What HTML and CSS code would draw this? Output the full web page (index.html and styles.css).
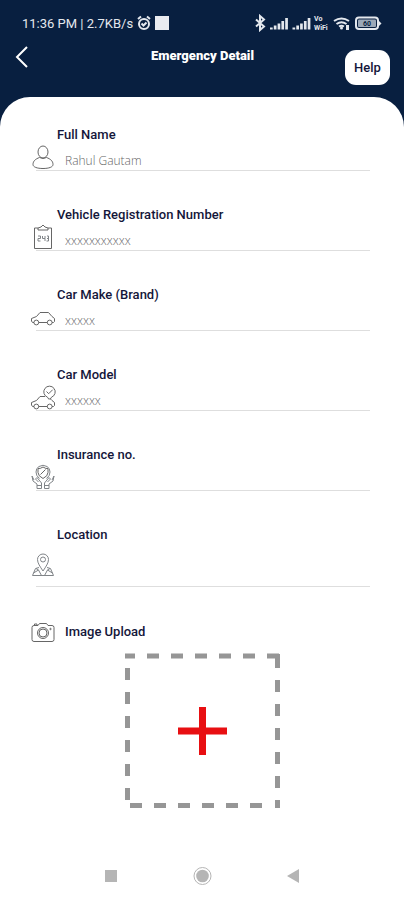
FILE: index.html
```html
<!DOCTYPE html>
<html lang="en">
<head>
<meta charset="utf-8">
<meta name="viewport" content="width=device-width, initial-scale=1">
<title>Emergency Detail</title>
<link rel="stylesheet" href="styles.css">
</head>
<body>
<div class="status">
  <span class="status-text">11:36 PM | 2.7KB/s</span>
  <svg class="alarm" width="14" height="16" viewBox="0 0 14 16" aria-hidden="true"><circle cx="7" cy="9" r="5"/><path d="M1 4l3-2.500M13 4l-3-2.500M4.500 8.500l2 2 3-3"/></svg>
  <span class="square"></span>
  <svg class="signals" width="127" height="18" viewBox="0 0 127 18" aria-hidden="true">
    <path class="line" d="M1 5.500l8 7-4 3.500V2l4 3.500-8 7"/>
    <path class="fill" d="M15 15.500v-2h2.700v2zM18.800 15.500v-4h2.700v4zM22.600 15.500v-6h2.700v6zM26.400 15.500v-8.500h2.700v8.500zM30.200 15.500V4h2.700v11.500zM37.500 15.500v-2h2.700v2zM41.300 15.500v-4h2.700v4zM45.100 15.500v-6h2.700v6zM48.900 15.500v-8.500h2.700v8.500zM52.700 15.500V4h2.700v11.500z"/>
    <text x="59" y="7">Vo</text><text x="59" y="16">WiFi</text>
    <path class="line" d="M79 7q7.500-5 15 0M81.500 10q5-3.500 10 0M84 12.500q2.500-1.500 5 0"/><circle class="fill" cx="86.500" cy="14" r="1.500"/><path class="fill" d="M91 11h3v5h-3z"/>
    <rect class="line" x="101" y="3.500" width="22" height="11.500" rx="3"/><path class="fill" d="M124 7l2.500 2.500-2.500 2.500z"/><rect class="cell" x="103" y="5.500" width="18" height="7.500" rx="1"/><text class="level" x="108" y="12">60</text>
  </svg>
</div>
<header class="header">
  <button class="back" type="button" aria-label="Back"><svg width="14" height="22" viewBox="0 0 14 22"><path d="M12 1L2 11l10 10"/></svg></button>
  <h1>Emergency Detail</h1>
  <button class="help" type="button">Help</button>
</header>
<main class="sheet">
  <form class="form">
    <div class="field">
      <label for="name">Full Name</label>
      <div class="row">
        <svg class="icon" viewBox="0 0 24 24" aria-hidden="true"><ellipse cx="12" cy="7" rx="5" ry="6"/><path d="M8.500 12.500C4.500 14 2 16 2 19.500c0 2.500 4 4 10 4s10-1.500 10-4c0-3.500-2.500-5.500-6.500-7M8.500 12.500q3.500 2 7 0"/></svg>
        <input id="name" type="text" placeholder="Rahul Gautam">
      </div>
    </div>
    <div class="field">
      <label for="registration">Vehicle Registration Number</label>
      <div class="row">
        <svg class="icon" viewBox="0 0 24 24" aria-hidden="true"><path d="M7 3H3.500v20.500h17V3H17M7 5V3l3-1 2-2 2 2 3 1v2z"/><path class="thin" d="M7 11h2.500v2.500H7V16h2.500M11.500 11v2.500H14V16M14 11v2.500M16 11h1.500v5H15.500M16 13.500h1.500"/></svg>
        <input id="registration" type="text" placeholder="xxxxxxxxxxx">
      </div>
    </div>
    <div class="field">
      <label for="make">Car Make (Brand)</label>
      <div class="row">
        <svg class="icon" viewBox="0 0 24 24" aria-hidden="true"><path d="M3 17.500H1.500L.5 16v-2.500l5-2L9 7.500h8.500l3.500 4 2.500 2v3l-1 1H21M7.600 17.500h8.800"/><circle cx="5.300" cy="17.500" r="2.400"/><circle cx="18.700" cy="17.500" r="2.400"/></svg>
        <input id="make" type="text" placeholder="xxxxx">
      </div>
    </div>
    <div class="field">
      <label for="model">Car Model</label>
      <div class="row">
        <svg class="icon" viewBox="0 0 24 24" aria-hidden="true"><path d="M3 21.500H1.500L.5 20v-2.500l5-2L9 11.500h5M18.500 13l2.500 2.500 2.500 2v3l-1 1H21M7.600 21.500h8.800M18 14.500l-1.500-2.300a5.700 5.700 0 1 1 4 0L19 14.500M15.500 6.500l2.200 2.200 4-4"/><circle cx="5.300" cy="21.500" r="2.400"/><circle cx="18.700" cy="21.500" r="2.400"/></svg>
        <input id="model" type="text" placeholder="xxxxxx">
      </div>
    </div>
    <div class="field">
      <label for="insurance">Insurance no.</label>
      <div class="row">
        <svg class="icon masked" viewBox="0 0 24 24" aria-hidden="true"><path d="M12 2q3 2 5 1.500v4Q17 11 12 13.500 7 11 7 7.500v-4Q9 4 12 2zM9.500 9.500l5-5"/><path class="thin" d="M8 1.500q4-2.500 8 0Q19 3 19 7t-3.500 6.500M8 1.500Q5 3 5 7t3.500 6.500M1 11l1 5 4 3v4.500h4.500V18L6 12.500 4.500 14l3 3M3 15L1 11M23 11l-1 5-4 3v4.500h-4.500V18l4.500-5.500 1.500 1.500-3 3M21 15l2-4M6 20.500h4.500M13.500 20.500H18"/></svg>
        <input id="insurance" type="text">
      </div>
    </div>
    <div class="field tall">
      <label for="location">Location</label>
      <div class="row">
        <svg class="icon" viewBox="0 0 24 24" aria-hidden="true"><path class="thin" d="M12 18C9 13.500 6.500 10 6.500 6.500a5.500 5.500 0 0 1 11 0C17.500 10 15 13.500 12 18z"/><circle class="thin" cx="12" cy="6.500" r="2.500"/><path class="thin" d="M8 14.500l-3.500 1L1.500 22.500h21l-3-7-3.500-1M2.500 20l5-3 3 5.500M21.500 20l-5-3-3 5.500M5 15.500l2.500 1.500M19 15.500L16.500 17"/></svg>
        <input id="location" type="text">
      </div>
    </div>
    <div class="upload-title">
      <svg class="icon" viewBox="0 0 24 24" aria-hidden="true"><path d="M3 4.500h4L8.500 2.500h7L17 4.500h4q2 0 2 2v12q0 2-2 2H3q-2 0-2-2v-12q0-2 2-2zM3.500 4V3H6v1"/><circle cx="12" cy="12" r="5.500"/><circle cx="12" cy="12" r="4"/><circle cx="19.500" cy="8" r=".7"/></svg>
      <span id="upload-label">Image Upload</span>
    </div>
    <button class="upload" type="button" aria-labelledby="upload-label">
      <svg width="156" height="156" viewBox="-1 0 156 156" aria-hidden="true">
        <path class="dash" d="M0 3h10M22 3H155" stroke-dasharray="12 12"/>
        <path class="dash" d="M152.500 1v14M152.500 27v121" stroke-dasharray="12 12"/>
        <path class="dash" d="M152.500 1v14M152.500 148v7"/>
        <path class="dash" d="M2.500 15v133" stroke-dasharray="12 12"/>
        <path class="dash" d="M5 152.500h133" stroke-dasharray="12 12"/>
        <path class="plus" d="M53 78h49M77.500 54v48"/>
      </svg>
    </button>
  </form>
  <nav class="nav" aria-label="System">
    <button type="button" aria-label="Recent apps"><svg width="19" height="20" viewBox="0 0 19 20"><path d="M3 4h12v12H3z"/></svg></button>
    <button type="button" aria-label="Home"><svg width="19" height="20" viewBox="0 0 19 20"><circle class="ring" cx="9.500" cy="10" r="8.500"/><circle cx="9.500" cy="10" r="6.300"/></svg></button>
    <button type="button" aria-label="Go back"><svg width="19" height="20" viewBox="0 0 19 20"><path d="M3 10l12-7v14z"/></svg></button>
  </nav>
</main>
</body>
</html>
```
FILE: styles.css
```css
* { box-sizing: border-box; }

body {
  margin: 0;
  min-height: 100vh;
  display: flex;
  flex-direction: column;
  background: #081f40;
  color: #14163a;
  font-family: Roboto, sans-serif;
}

button {
  padding: 0;
  border: 0;
  background: none;
  font: inherit;
  color: inherit;
}

svg { display: block; flex: none; }

.status {
  display: flex;
  align-items: center;
  gap: 4px;
  height: 46px;
  padding: 0 22px;
  color: #e4e8ee;
}
.status-text { font-size: 13px; font-weight: 400; white-space: nowrap; }
.alarm { fill: none; stroke: #e4e8ee; stroke-width: 2; }
.square { width: 14px; height: 14px; background: #e9ebf0; }
.signals { margin-left: auto; fill: #e4e8ee; }
.signals .line { fill: none; stroke: #e4e8ee; stroke-width: 2; }
.signals .cell { fill: #9ba8b8; }
.signals text { font-size: 7px; font-weight: 700; }
.signals .level { fill: #081f40; }

.header {
  display: grid;
  grid-template-columns: 60px 1fr 60px;
  height: 51px;
  padding: 0 14px 0 15px;
}
.back { width: 14px; height: 22px; }
.back svg { fill: none; stroke: #fff; stroke-width: 2; }
h1 {
  margin: 0;
  color: #fff;
  font-size: 13px;
  line-height: 20px;
  font-weight: 900;
  text-align: center;
}
.help {
  justify-self: end;
  width: 45px;
  height: 35px;
  margin-top: 4px;
  border-radius: 11px;
  background: #fff;
  font-size: 13px;
  font-weight: 500;
}

.sheet {
  flex: 1;
  display: flex;
  flex-direction: column;
  padding-top: 30px;
  border-radius: 30px 30px 0 0;
  background: #fff;
}

.form { padding: 0 31px; }
.field { margin-bottom: 36px; }
.field label {
  display: block;
  padding-left: 26px;
  font-size: 13px;
  line-height: 16px;
  font-weight: 500;
}
.row {
  display: flex;
  align-items: center;
  height: 28px;
  margin: 0 3px 0 5px;
  border-bottom: 1px solid #dedede;
}
.row .icon { margin-left: -5px; }
.tall .row { height: 44px; }
.field input {
  flex: 1;
  min-width: 0;
  height: 27px;
  padding: 7px 0 0 10px;
  border: 0;
  outline: 0;
  background: none;
  color: #555;
  font: 300 12px "Open Sans", sans-serif;
}
.field input::placeholder { color: #666; opacity: 1; }

.icon {
  width: 24px;
  height: 24px;
  fill: none;
  stroke: #666;
  stroke-width: 1;
  overflow: visible;
}
.icon .thin { stroke: #808488; }
.masked { background: #fff; }

.upload-title {
  display: flex;
  align-items: center;
  gap: 10px;
  margin-top: -2px;
  font-size: 13px;
  font-weight: 500;
}
.upload-title span { padding-bottom: 4px; }
.upload {
  display: block;
  margin: 8px auto 0;
}
.dash { fill: none; stroke: #969696; stroke-width: 5; }
.plus { fill: none; stroke: #e80f12; stroke-width: 7; }

.nav {
  display: flex;
  justify-content: center;
  gap: 72px;
  margin-top: auto;
  padding: 14px 0;
}
.nav svg { fill: #b5b5b5; }
.nav .ring { fill: none; stroke: #b5b5b5; stroke-width: 1; }
```
